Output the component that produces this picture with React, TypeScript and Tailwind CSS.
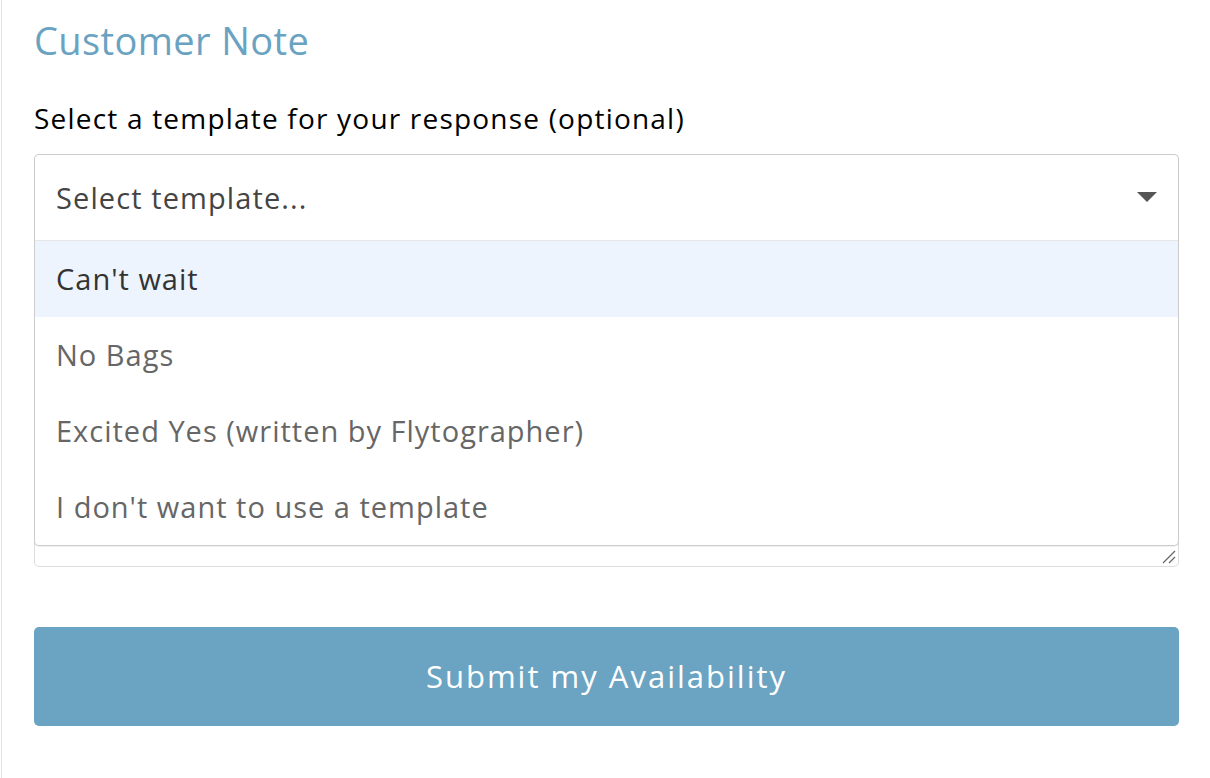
import React from "react";

const options = [
  "Can't wait",
  "No Bags",
  "Excited Yes (written by Flytographer)",
  "I don't want to use a template",
];

export default function App() {
  return (
    <div className="h-[778px] w-full bg-white pl-[1px]" style={{ fontFamily: "'Open Sans', Lato, sans-serif" }}>
      <div className="h-full border-l border-[#e2e2e2] pl-[32px] pr-[31px]">
        <h1 className="pt-[15px] text-[38px] font-normal leading-[50px] tracking-[0.4px] text-[#6aa3c2]">Customer Note</h1>
        <div className="mt-[35px] text-[28px] font-normal leading-[36px] tracking-[1.2px] text-black">Select a template for your response (optional)</div>
        <div className="relative mt-[18px]">
          <div className="flex h-[86px] items-center justify-between rounded-t-[5px] border border-b-0 border-[#cccccc] pl-[21px] pr-[21px]">
            <span className="text-[29px] tracking-[1.1px] text-[#444444]">Select template...</span>
            <svg width="20" height="10" viewBox="0 0 20 10" className="mb-[2px]">
              <polygon points="0,0 20,0 10,10" fill="#555555" />
            </svg>
          </div>
          <div className="mt-[20px] h-[307px] rounded-[5px] border border-[#dddddd] bg-white relative">
            <svg width="14" height="14" viewBox="0 0 14 14" className="absolute bottom-[2px] right-[2px]">
              <line x1="1" y1="13" x2="13" y2="1" stroke="#666" strokeWidth="1.2" />
              <line x1="7" y1="13" x2="13" y2="7" stroke="#666" strokeWidth="1.2" />
            </svg>
          </div>
          <div className="absolute left-0 right-0 top-[86px] rounded-b-[5px] border border-t-0 border-[#cccccc] bg-white shadow-[0_1px_0_rgba(0,0,0,0.06)]">
            <div className="border-t border-[#e6e6e6]">
              {options.map((o, i) => (
                <div
                  key={o}
                  className={
                    i === 0
                      ? "flex h-[76px] items-center bg-[#edf4fe] pl-[21px] text-[29px] tracking-[1px] text-[#333333]"
                      : "flex h-[76px] items-center pl-[21px] text-[29px] tracking-[1px] text-[#666666]"
                  }
                >
                  {o}
                </div>
              ))}
            </div>
          </div>
        </div>
        <button className="mt-[60px] flex h-[99px] w-full items-center justify-center rounded-[5px] bg-[#6ba4c2] text-[31px] tracking-[2px] text-white">
          Submit my Availability
        </button>
      </div>
    </div>
  );
}
